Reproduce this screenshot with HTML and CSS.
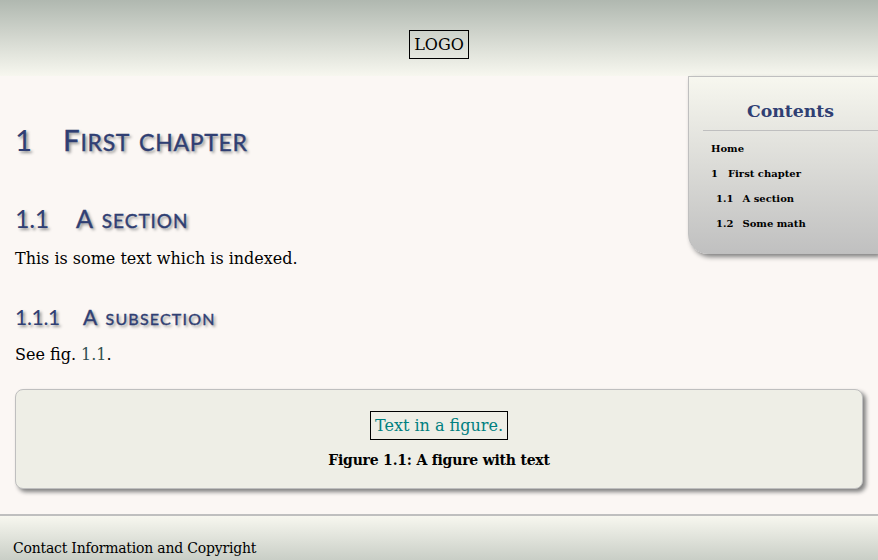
FILE: index.html
```html
<!DOCTYPE html>
<html lang="en">
<head>
<meta charset="utf-8">
<title>First chapter</title>
<link rel="stylesheet" href="styles.css">
</head>
<body>
<header class="top"><span class="framed">LOGO</span></header>
<nav class="toc">
  <h2 class="toc-title">Contents</h2>
  <a class="toc-item">Home</a>
  <a class="toc-item"><span class="toc-num">1</span>First chapter</a>
  <a class="toc-item sub"><span class="toc-num">1.1</span>A section</a>
  <a class="toc-item sub"><span class="toc-num">1.2</span>Some math</a>
</nav>
<main class="text">
  <h1 class="chapter"><span class="num">1</span><span class="title">First chapter</span></h1>
  <h2 class="section"><span class="num">1.1</span><span class="title">A section</span></h2>
  <p>This is some text which is indexed.</p>
  <h3 class="subsection"><span class="num">1.1.1</span><span class="title">A subsection</span></h3>
  <p>See fig. <a class="ref">1.1</a>.</p>
  <figure class="figure">
    <div class="framed teal">Text in a figure.</div>
    <figcaption>Figure 1.1: A figure with text</figcaption>
  </figure>
</main>
<footer class="bottom">Contact Information and Copyright</footer>
</body>
</html>
```
FILE: styles.css
```css
* { box-sizing: border-box; }
html { height: 100%; overflow: hidden; }
body {
  margin: 0;
  height: 560px;
  overflow: hidden;
  background: #fbf7f4;
  color: #000;
  font: 16px/19px "DejaVu Serif", serif;
}
.top {
  height: 76px;
  padding-top: 30px;
  text-align: center;
  background: linear-gradient(#b0b8b0, #f7f7ef);
}
.framed {
  display: inline-block;
  height: 29px;
  padding: 4px;
  border: 1px solid #000;
}
.toc {
  float: right;
  width: 190px;
  height: 178px;
  padding: 24px 0 0 14px;
  border: 1px solid #bfbfbf;
  border-right: 0;
  border-bottom-left-radius: 20px;
  background: linear-gradient(#f7f7ef, #c0c0c0);
  box-shadow: 3px 3px 5px #808080;
}
.toc-title {
  margin: 0 0 5px;
  height: 30px;
  border-bottom: 1px solid #bfbfbf;
  color: #303f73;
  font-size: 17.3px;
  line-height: 20px;
  text-align: center;
}
.toc-item {
  display: block;
  padding-left: 8px;
  font-size: 10px;
  font-weight: bold;
  line-height: 25px;
}
.sub { padding-left: 13px; }
.sub .toc-num { margin-right: 9px; }
.toc-num { margin-right: 10px; }
.text { height: 438px; padding: 45px 15px 0; }
.chapter, .section, .subsection {
  display: flex;
  margin: 0;
  color: #303f73;
  font-family: Lato, sans-serif;
  font-weight: 400;
  font-variant: small-caps;
  text-shadow: 2px 2px 3px #909090;
}
.title {
  font-size: 1.09em;
  -webkit-text-stroke: 0.4px;
}
.title::first-letter { font-size: 0.92em; }
.num { letter-spacing: -0.3px; }
.chapter { height: 78px; font-size: 29.5px; line-height: 37px; }
.chapter .num { width: 48px; }
.chapter .title { line-height: 36px; letter-spacing: 0.7px; }
.section { height: 50px; font-size: 25px; line-height: 38px; }
.section .num { width: 61px; }
.section .title { letter-spacing: 0.95px; }
.subsection { height: 42px; font-size: 21px; line-height: 28px; }
.subsection .num { width: 68px; }
.subsection .title { line-height: 26px; letter-spacing: 1.2px; }
p { margin: 0; }
.section + p { margin-bottom: 35px; }
.ref { color: #2f4f4f; }
.figure {
  height: 100px;
  margin: 25px 0 0;
  padding-top: 21px;
  border: 1px solid #bfbfbf;
  border-radius: 8px;
  background: #eeeee6;
  box-shadow: 3px 3px 4px #808080;
  text-align: center;
}
.teal { color: #008080; border-color: #000; }
.figure figcaption {
  margin-top: 11px;
  font-size: 14px;
  font-weight: bold;
  letter-spacing: -0.22px;
}
.bottom {
  height: 70px;
  padding: 23px 13px;
  border-top: 2px solid #bfbfbf;
  background: linear-gradient(#f7f7ef, #b0b8b0);
  font-size: 14px;
  letter-spacing: -0.21px;
}
```
